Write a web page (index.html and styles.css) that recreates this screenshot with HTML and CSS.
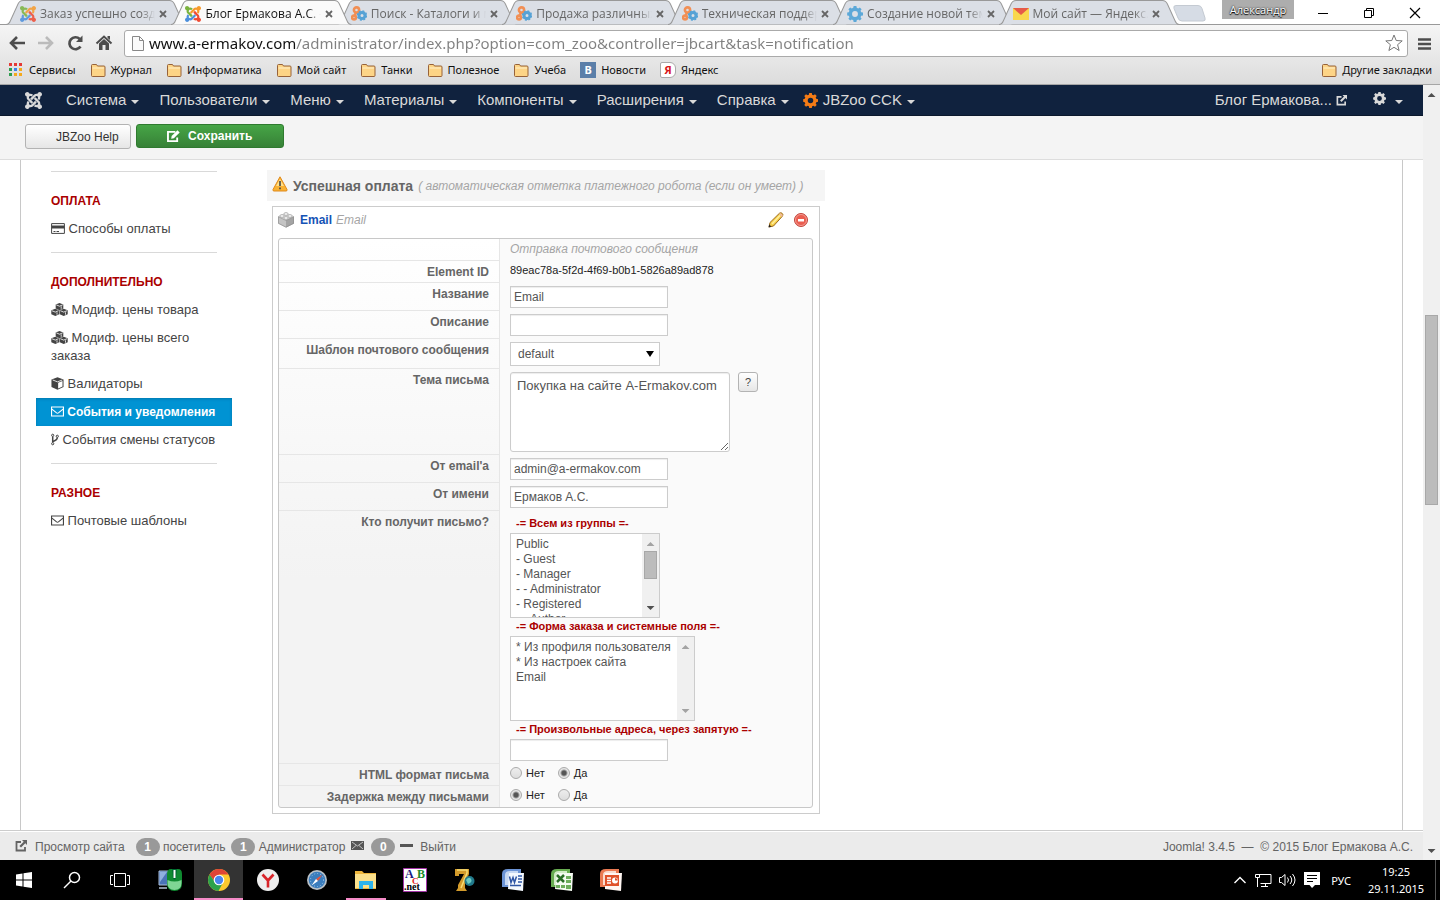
FILE: index.html
```html
<!DOCTYPE html>
<html lang="ru">
<head>
  <meta charset="UTF-8">
  <meta name="viewport" content="width=device-width, initial-scale=1.0">
  <title>Блог Ермакова А.С.</title>
  <link rel="stylesheet" href="styles.css">
</head>
<body>
  <!-- shared icons -->
  <svg class="defs" width="0" height="0">
    <defs>
      <path id="arm" d="M16.7 14.8L14.2 17.3l-2.4 2.3-.4.5c-1.4 1.4-3.3 1.8-5.1 1.4-.3 1.4-1.6 2.5-3.1 2.5C1.4 24 0 22.500 0 20.800c0-1.500 1.100-2.800 2.500-3.100-.4-1.800 0-3.700 1.400-5.100l.1-.2 2.400 2.400-.2.2c-.8.8-.8 2 0 2.800.8.800 2 .8 2.800 0l.5-.5 2.300-2.400 2.500-2.500z"/>
      <path id="gearShape" d="M7 0h3l.4 2 1.600.700L13.700 1.500l2 2-1.200 1.800.7 1.500 2 .4v3l-2 .4-.7 1.600 1.200 1.700-2 2-1.700-1.200-1.600.7L10 17.400H7l-.4-2-1.600-.7-1.700 1.200-2-2 1.200-1.700-.7-1.600L0 10.200v-3l1.800-.4.7-1.500L1.300 3.500l2-2L5 2.700 6.600 2zM8.500 5.500a3.200 3.200 0 1 0 0 6.400 3.200 3.200 0 0 0 0-6.400z" fill-rule="evenodd"/>
    </defs>
    <symbol id="joomla" viewBox="0 0 24 24">
      <use href="#arm" fill="#4b8fdc"/>
      <use href="#arm" fill="#7ab33e" transform="rotate(90 12 12)"/>
      <use href="#arm" fill="#f79a2b" transform="rotate(180 12 12)"/>
      <use href="#arm" fill="#ef4b33" transform="rotate(270 12 12)"/>
    </symbol>
    <symbol id="joomla-mono" viewBox="0 0 24 24">
      <use href="#arm"/>
      <use href="#arm" transform="rotate(90 12 12)"/>
      <use href="#arm" transform="rotate(180 12 12)"/>
      <use href="#arm" transform="rotate(270 12 12)"/>
    </symbol>
    <symbol id="gear" viewBox="0 0 17 17.400"><use href="#gearShape"/></symbol>
    <symbol id="gears" viewBox="0 0 16 16">
      <g fill="none" stroke="#f5823c" stroke-width="2.600"><circle cx="5.500" cy="4" r="2.600"/><circle cx="3" cy="11.500" r="1.900"/><path d="M5 6.500L3.500 10"/></g>
      <circle cx="11" cy="9.500" r="3" fill="none" stroke="#3f98d3" stroke-width="3"/>
      <circle cx="11" cy="9.500" r="4.600" fill="none" stroke="#3f98d3" stroke-width="1.200" stroke-dasharray="2 1.600"/>
    </symbol>
    <symbol id="folder" viewBox="0 0 16 14">
      <path d="M1.500 12.500V2.500q0-1 1-1h4l1 1.500h6.500q1 0 1 1v8.500q0 1-1 1h-11.500q-1 0-1-1z" fill="#fdd486" stroke="#976239"/>
      <path d="M2.500 5h11.500" stroke="#fff0c8"/>
    </symbol>
    <symbol id="close" viewBox="0 0 8 8"><path d="M1 1l6 6M7 1L1 7" stroke="currentColor" stroke-width="1.800"/></symbol>
    <symbol id="external" viewBox="0 0 12 12">
      <path d="M6 2H1.500v8.500H10V7" fill="none" stroke="currentColor" stroke-width="1.800"/>
      <path d="M7 0h5v5l-1.700-1.700L6 7.600 4.400 6l4.300-4.300z" fill="currentColor"/>
    </symbol>
    <symbol id="mail" viewBox="0 0 14 12">
      <path d="M.6 1.100h12.800v9.800H.6zM1 3.500l5 4q1 .7 2 0l5-4" fill="none" stroke="currentColor" stroke-width="1.200"/>
    </symbol>
    <symbol id="cube" viewBox="0 0 14 14">
      <path d="M7 .3l6.500 2.500v8L7 13.700.5 10.800v-8z" fill="currentColor"/>
      <path d="M7.700 6.300l4.700-1.900v5.700l-4.700 2.200z" fill="#fff"/>
      <path d="M1.800 3.200L7 5.200l5.200-2" fill="none" stroke="#fff" stroke-width=".9"/>
    </symbol>
    <symbol id="cubes" viewBox="0 0 17 13">
      <g fill="currentColor"><path d="M8.500 0l3.800 1.500v4l-3.800 1.700-3.800-1.700v-4z"/><path d="M4.300 5.800l4 1.500v4L4.300 13 .3 11.300v-4z"/><path d="M12.700 5.800l4 1.500v4l-4 1.700-4-1.700v-4z"/></g>
      <g fill="none" stroke="#fff" stroke-width=".8"><path d="M5.300 1.900l3.200 1.300 3.200-1.300M10.200 3.300v2.500M.8 7.700l3.500 1.400 3.200-1.400M6 9.300v2.400M9.300 7.700l3.400 1.400 3.400-1.400M14.500 9.300v2.400"/></g>
    </symbol>
  </svg>

  <header class="browser">
    <div class="tab-strip">
      <div class="tabs">
        <div class="tab">
          <svg class="tab-shape" viewBox="0 0 180 25" preserveAspectRatio="none"><path d="M0 24.500q3 0 4.500-4L12 4q1.500-3.500 5-3.500h146q3.500 0 5 3.500l7.500 16.500q1.500 4 4.500 4"/></svg>
          <svg class="fav"><use href="#joomla"/></svg><span class="tab-title">Заказ успешно созд</span>
          <button class="tab-close" aria-label="Закрыть"><svg><use href="#close"/></svg></button>
        </div>
        <div class="tab active">
          <svg class="tab-shape" viewBox="0 0 180 25" preserveAspectRatio="none"><path d="M0 24.500q3 0 4.500-4L12 4q1.500-3.500 5-3.500h146q3.500 0 5 3.500l7.500 16.500q1.500 4 4.500 4"/></svg>
          <svg class="fav"><use href="#joomla"/></svg><span class="tab-title">Блог Ермакова А.С. -</span>
          <button class="tab-close" aria-label="Закрыть"><svg><use href="#close"/></svg></button>
        </div>
        <div class="tab">
          <svg class="tab-shape" viewBox="0 0 180 25" preserveAspectRatio="none"><path d="M0 24.500q3 0 4.500-4L12 4q1.500-3.500 5-3.500h146q3.500 0 5 3.500l7.500 16.500q1.500 4 4.500 4"/></svg>
          <svg class="fav"><use href="#gears"/></svg><span class="tab-title">Поиск - Каталоги и м</span>
          <button class="tab-close" aria-label="Закрыть"><svg><use href="#close"/></svg></button>
        </div>
        <div class="tab">
          <svg class="tab-shape" viewBox="0 0 180 25" preserveAspectRatio="none"><path d="M0 24.500q3 0 4.500-4L12 4q1.500-3.500 5-3.500h146q3.500 0 5 3.500l7.500 16.500q1.500 4 4.500 4"/></svg>
          <svg class="fav"><use href="#gears"/></svg><span class="tab-title">Продажа различных</span>
          <button class="tab-close" aria-label="Закрыть"><svg><use href="#close"/></svg></button>
        </div>
        <div class="tab">
          <svg class="tab-shape" viewBox="0 0 180 25" preserveAspectRatio="none"><path d="M0 24.500q3 0 4.500-4L12 4q1.500-3.500 5-3.500h146q3.500 0 5 3.500l7.500 16.500q1.500 4 4.500 4"/></svg>
          <svg class="fav"><use href="#gears"/></svg><span class="tab-title">Техническая поддер</span>
          <button class="tab-close" aria-label="Закрыть"><svg><use href="#close"/></svg></button>
        </div>
        <div class="tab">
          <svg class="tab-shape" viewBox="0 0 180 25" preserveAspectRatio="none"><path d="M0 24.500q3 0 4.500-4L12 4q1.500-3.500 5-3.500h146q3.500 0 5 3.500l7.500 16.500q1.500 4 4.500 4"/></svg>
          <svg class="fav blue"><use href="#gear"/></svg><span class="tab-title">Создание новой тем</span>
          <button class="tab-close" aria-label="Закрыть"><svg><use href="#close"/></svg></button>
        </div>
        <div class="tab">
          <svg class="tab-shape" viewBox="0 0 180 25" preserveAspectRatio="none"><path d="M0 24.500q3 0 4.500-4L12 4q1.500-3.500 5-3.500h146q3.500 0 5 3.500l7.500 16.500q1.500 4 4.500 4"/></svg>
          <svg class="fav" viewBox="0 0 16 16"><path d="M0 2h16v12H0z" fill="#ffd633"/><path d="M0 2h16L8 9z" fill="#e8432e"/></svg><span class="tab-title">Мой сайт — Яндекс.</span>
          <button class="tab-close" aria-label="Закрыть"><svg><use href="#close"/></svg></button>
        </div>
      </div>
      <button class="new-tab" aria-label="Новая вкладка"><svg viewBox="0 0 33 17"><path d="M3 .5h22q3 0 4 3l3 9.500q1 3-2 3H9q-3 0-4-3L1 3.500Q0 .5 3 .5z" fill="#d6dce5" stroke="#c4cad2"/></svg></button>
      <div class="window-buttons">
        <button class="profile">Александр</button>
        <button aria-label="Свернуть"><svg viewBox="0 0 12 12"><path d="M1 6.500h10" stroke="#000"/></svg></button>
        <button aria-label="Развернуть"><svg viewBox="0 0 12 12"><path d="M1.500 3.500h7v7h-7zM3.500 3V1.500h7v7H9" fill="none" stroke="#000"/></svg></button>
        <button aria-label="Закрыть окно"><svg viewBox="0 0 12 12"><path d="M1 1l10 10M11 1L1 11" stroke="#000" stroke-width="1.200"/></svg></button>
      </div>
    </div>

    <div class="toolbar">
      <button aria-label="Назад"><svg viewBox="0 0 18 18"><path d="M9 3L3 9l6 6M3 9h14" fill="none" stroke="#4d4d4d" stroke-width="2.600"/></svg></button>
      <button aria-label="Вперёд"><svg viewBox="0 0 18 18"><path d="M9 3l6 6-6 6M15 9H1" fill="none" stroke="#bbb" stroke-width="2.600"/></svg></button>
      <button aria-label="Обновить"><svg viewBox="0 0 18 18"><path d="M14.500 12.500a6 6 0 1 1-.8-7.500" fill="none" stroke="#4d4d4d" stroke-width="2.700"/><path d="M16.500 1.500v6.500H10z" fill="#4d4d4d"/></svg></button>
      <button aria-label="Домой"><svg viewBox="0 0 18 18"><path d="M1.500 9.500L9 2.500l7.500 7" fill="none" stroke="#4d4d4d" stroke-width="2"/><path d="M4 9.500l5-4.500 5 4.500V16h-3.500v-5h-3v5H4zM12.500 2H15v4l-2.500-2z" fill="#4d4d4d"/></svg></button>
      <div class="omnibox">
        <svg class="doc" viewBox="0 0 12 15"><path d="M.5.5h7l4 4v10H.5zM7.500.5v4h4" fill="#fafafa" stroke="#888"/></svg>
        <input class="url" aria-label="Адрес" value="www.a-ermakov.com/administrator/index.php?option=com_zoo&amp;controller=jbcart&amp;task=notification">
        <svg class="star" viewBox="0 0 18 18"><path d="M9 1l2.200 5.500 6 .4-4.600 3.800 1.500 5.800L9 13.300l-5.100 3.200 1.500-5.800L.8 6.900l6-.4z" fill="#fff" stroke="#777"/></svg>
      </div>
      <button class="menu" aria-label="Меню"><svg viewBox="0 0 14 14"><path d="M0 2.500h13M0 7h13M0 11.500h13" stroke="#4d4d4d" stroke-width="2.600"/></svg></button>
    </div>

    <nav class="bookmarks">
      <a href="#"><svg viewBox="0 0 14 14"><path d="M0 0h3v3H0zM5 0h3v3H5zM10 0h3v3h-3z" fill="#e53935"/><path d="M0 5h3v3H0z" fill="#2e9e4f"/><path d="M5 5h3v3H5z" fill="#3b82e8"/><path d="M10 5h3v3h-3zM5 10h3v3H5zM10 10h3v3h-3z" fill="#f4a91c"/><path d="M0 10h3v3H0z" fill="#2e9e4f"/></svg>Сервисы</a>
      <a href="#"><svg><use href="#folder"/></svg>Журнал</a>
      <a href="#"><svg><use href="#folder"/></svg>Информатика</a>
      <a href="#"><svg><use href="#folder"/></svg>Мой сайт</a>
      <a href="#"><svg><use href="#folder"/></svg>Танки</a>
      <a href="#"><svg><use href="#folder"/></svg>Полезное</a>
      <a href="#"><svg><use href="#folder"/></svg>Учеба</a>
      <a href="#"><span class="vk">B</span>Новости</a>
      <a href="#"><span class="ya">Я</span>Яндекс</a>
      <a class="other" href="#"><svg><use href="#folder"/></svg>Другие закладки</a>
    </nav>
  </header>

  <div class="viewport">
    <div class="page">
      <nav class="navbar">
        <a class="brand" href="#" aria-label="Joomla"><svg><use href="#joomla-mono"/></svg></a>
        <a class="caret" href="#">Система</a>
        <a class="caret" href="#">Пользователи</a>
        <a class="caret" href="#">Меню</a>
        <a class="caret" href="#">Материалы</a>
        <a class="caret" href="#">Компоненты</a>
        <a class="caret" href="#">Расширения</a>
        <a class="caret" href="#">Справка</a>
        <a class="caret jbzoo" href="#"><svg><use href="#gear"/></svg>JBZoo CCK</a>
        <a class="site" href="#">Блог Ермакова... <svg><use href="#external"/></svg></a>
        <a class="caret settings" href="#" aria-label="Настройки"><svg><use href="#gear"/></svg></a>
      </nav>

      <div class="subhead">
        <button class="btn help-btn">JBZoo Help</button>
        <button class="btn save-btn"><svg viewBox="0 0 14 13"><path d="M9 2H1v10h10V8" fill="none" stroke="#fff" stroke-width="2"/><path d="M4.500 9.500l.5-3L11.300.3l2.400 2.400-6.300 6.300z" fill="#fff"/></svg>Сохранить</button>
      </div>

      <div class="content">
        <aside class="sidebar">
          <hr>
          <h3>ОПЛАТА</h3>
          <a href="#"><svg class="w14" viewBox="0 0 14 12"><path d="M.6 1.100h12.800v9.800H.6zM2.500 9h2M5.500 9h2.500" fill="none" stroke="currentColor"/><path d="M.6 3h12.800v3H.6z" fill="currentColor"/></svg> Способы оплаты</a>
          <hr>
          <h3>ДОПОЛНИТЕЛЬНО</h3>
          <a href="#"><svg class="w17"><use href="#cubes"/></svg> Модиф. цены товара</a>
          <a href="#"><svg class="w17"><use href="#cubes"/></svg> Модиф. цены всего заказа</a>
          <a href="#"><svg class="w13"><use href="#cube"/></svg> Валидаторы</a>
          <a class="active" href="#"><svg class="w13"><use href="#mail"/></svg> События и уведомления</a>
          <a href="#"><svg class="w8" viewBox="0 0 8 12"><g fill="none" stroke="currentColor"><circle cx="1.700" cy="1.800" r="1.100"/><circle cx="6.300" cy="2.800" r="1.100"/><circle cx="1.700" cy="10.200" r="1.100"/><path d="M1.700 3v6M6.300 4q0 2.500-4.300 4" stroke-width="1.500"/></g></svg> События смены статусов</a>
          <hr>
          <h3>РАЗНОЕ</h3>
          <a href="#"><svg class="w13"><use href="#mail"/></svg> Почтовые шаблоны</a>
        </aside>

        <main class="main">
          <h2 class="event">
            <svg viewBox="0 0 16 16"><path d="M8 .8L15 13.500q.5 1.500-1 1.500H2q-1.500 0-1-1.500z" fill="#f9b233" stroke="#e08a1c"/><path d="M8 3L4 10h8z" fill="#ffe08a"/><path d="M8 5v5M8 11.500v1.800" stroke="#444" stroke-width="1.600"/></svg>
            Успешная оплата <em>( автоматическая отметка платежного робота (если он умеет) )</em>
          </h2>

          <section class="element">
            <header class="element-head">
              <svg class="brick" viewBox="0 0 16 16"><path d="M0 4.500L8 1l8 3.500v7L8 15.500l-8-4z" fill="#c4c4c4"/><path d="M0 4.500L8 1l8 3.500L8 8.500z" fill="#e4e4e4"/><path d="M8 8.500v7l8-4v-7z" fill="#a4a4a4"/><path d="M.4 4.700L8 8.500l7.600-3.800v6.600L8 15.200.4 11.300z" fill="none" stroke="#8e8e8e" stroke-width=".7"/><g fill="#f6f6f6" stroke="#999" stroke-width=".7"><ellipse cx="8" cy="2" rx="2.200" ry="1.400"/><ellipse cx="4" cy="4" rx="2.200" ry="1.400"/><ellipse cx="12" cy="4" rx="2.200" ry="1.400"/><ellipse cx="8" cy="6" rx="2.200" ry="1.400"/></g></svg>
              <strong>Email</strong> <em>Email</em>
              <button class="edit" aria-label="Изменить"><svg viewBox="0 0 16 16"><path d="M1 15l1-4.500L11.500 1.200q1.500-1 2.700.2 1.300 1.300.3 2.700L5.500 14z" fill="#f7cf4a" stroke="#9c6a1c"/><path d="M4 12l8-8.500" stroke="#fff0a0" stroke-width="1.500"/><path d="M11 2l3 3 .8-1.500-2-2.300z" fill="#f0b9a0"/><path d="M.5 15.500l.8-3 2 2z" fill="#222"/></svg></button>
              <button aria-label="Удалить"><svg viewBox="0 0 16 16"><circle cx="8" cy="8" r="6.500" fill="#ea5d50" stroke="#c0473e"/><circle cx="8" cy="8" r="5.500" fill="none" stroke="#f49a90"/><path d="M5 7h6v2.500H5z" fill="#fff"/></svg></button>
            </header>

            <form class="params">
              <div class="row"><span class="label"></span><div class="field"><em>Отправка почтового сообщения</em></div></div>
              <div class="row"><span class="label">Element ID</span><div class="field small">89eac78a-5f2d-4f69-b0b1-5826a89ad878</div></div>
              <div class="row"><label class="label" for="name">Название</label><div class="field"><input class="text" id="name" value="Email"></div></div>
              <div class="row"><label class="label" for="desc">Описание</label><div class="field"><input class="text" id="desc"></div></div>
              <div class="row"><label class="label" for="layout">Шаблон почтового сообщения</label><div class="field"><span class="select-box"><select id="layout"><option>default</option></select></span></div></div>
              <div class="row"><label class="label" for="subject">Тема письма</label><div class="field subject"><textarea id="subject">Покупка на сайте A-Ermakov.com</textarea><button type="button" class="hint">?</button></div></div>
              <div class="row"><label class="label" for="from">От email'a</label><div class="field"><input class="text" id="from" value="admin@a-ermakov.com"></div></div>
              <div class="row"><label class="label" for="from-name">От имени</label><div class="field"><input class="text" id="from-name" value="Ермаков А.С."></div></div>
              <div class="row">
                <span class="label">Кто получит письмо?</span>
                <div class="field recipients">
                  <label for="groups">-= Всем из группы =-</label>
                  <div class="list-box groups">
                    <select id="groups" multiple>
                      <option>Public</option><option>- Guest</option><option>- Manager</option><option>- - Administrator</option><option>- Registered</option><option>- - Author</option>
                    </select>
                    <div class="scroll"><i class="up off"></i><i class="thumb"></i><i class="down"></i></div>
                  </div>
                  <label for="fields">-= Форма заказа и системные поля =-</label>
                  <div class="list-box fields">
                    <select id="fields" multiple>
                      <option>* Из профиля пользователя</option><option>* Из настроек сайта</option><option>Email</option>
                    </select>
                    <div class="scroll"><i class="up off"></i><i class="down off"></i></div>
                  </div>
                  <label for="custom">-= Произвольные адреса, через запятую =-</label>
                  <input class="text" id="custom">
                </div>
              </div>
              <div class="row"><span class="label">HTML формат письма</span><div class="field radios"><label><input type="radio" name="html">Нет</label><label><input type="radio" name="html" checked>Да</label></div></div>
              <div class="row"><span class="label">Задержка между письмами</span><div class="field radios"><label><input type="radio" name="delay" checked>Нет</label><label><input type="radio" name="delay">Да</label></div></div>
            </form>
          </section>
        </main>
      </div>

      <footer class="status">
        <a href="#"><svg class="ext"><use href="#external"/></svg>Просмотр сайта</a>
        <span class="visitors"><b>1</b> посетитель</span>
        <span><b>1</b> Администратор</span>
        <a class="inbox" href="#"><svg viewBox="0 0 13 9"><path d="M0 0h13v9H0z" fill="#555"/><path d="M1 1l5.500 4L12 1M1 8l4-3.500M12 8L8 4.500" fill="none" stroke="#ddd" stroke-width=".8"/></svg><b>0</b></a>
        <a class="logout" href="#"><svg viewBox="0 0 13 3"><path d="M0 0h13v3H0z" fill="#555"/></svg>Выйти</a>
        <span class="copyright">Joomla! 3.4.5 &nbsp;—&nbsp; © 2015 Блог Ермакова А.С.</span>
      </footer>
    </div>
    <div class="scroll page-scroll"><i class="up"></i><i class="thumb"></i><i class="down"></i></div>
  </div>

  <footer class="taskbar">
    <button class="system" aria-label="Пуск"><svg viewBox="0 0 24 24"><path d="M4 6.500l6.500-1v6H4zM11.500 5.300L20 4v7.500h-8.500zM4 12.500h6.500v6l-6.500-1zM11.500 12.500H20V20l-8.500-1.200z" fill="#fff"/></svg></button>
    <button class="system" aria-label="Поиск"><svg viewBox="0 0 24 24"><g fill="none" stroke="#fff" stroke-width="1.500"><circle cx="14.500" cy="9.500" r="5"/><path d="M11 13l-7 7"/></g></svg></button>
    <button class="system" aria-label="Представление задач"><svg viewBox="0 0 24 24"><path d="M6.500 5.500h11v13h-11zM5 7.500H2.500v9H5M19 7.500h2.500v9H19" fill="none" stroke="#fff"/></svg></button>
    <button aria-label="Мышь"><svg viewBox="0 0 24 24"><path d="M1 3h9v14H1z" fill="#4a74b8" stroke="#a8bcd8"/><path d="M2 4h7L2 14z" fill="#8fb0e0"/><path d="M1 19h8v2H1z" fill="#8892a0"/><path d="M9 6q0-5 4-5h7q4 0 4 5v9q0 8-7.500 8T9 15z" fill="#0f8a30"/><path d="M9.500 12q7 3 14 0v3q0 7-7 7t-7-7z" fill="#7fd694"/><path d="M14 1h5l-1 9q-1.500 3-3 0z" fill="#063"/><path d="M15.500 2h2v8h-2z" fill="#fff"/></svg></button>
    <button class="current" aria-label="Chrome"><svg viewBox="0 0 24 24"><circle cx="12" cy="12" r="11" fill="#fbc92e"/><path d="M2.500 6.500A11 11 0 0 1 21.500 6.500H12L8 14z" fill="#df4436"/><path d="M2.500 6.500A11 11 0 0 0 11.500 23l4.500-8.500-4-2.500-4 2z" fill="#2ba24c"/><circle cx="12" cy="12" r="5.300" fill="#fff"/><circle cx="12" cy="12" r="4.200" fill="#4a86ee"/></svg></button>
    <button aria-label="Яндекс"><svg viewBox="0 0 24 24"><circle cx="12" cy="12" r="11" fill="#eee"/><path d="M6.500 6.500L12 12.500l5.500-6M12 12v7.500" fill="none" stroke="#d8252a" stroke-width="2.600"/></svg></button>
    <button aria-label="Safari"><svg viewBox="0 0 24 24"><circle cx="12" cy="12" r="10" fill="#b9c0c6"/><circle cx="12" cy="12" r="8.300" fill="#3b7dbd"/><circle cx="12" cy="12" r="6.500" fill="none" stroke="#9cc9ea" stroke-dasharray="1 2"/><path d="M17.500 6.500L13 13l-2-2z" fill="#e5533d"/><path d="M6.500 17.500L13 13l-2-2z" fill="#fff"/></svg></button>
    <button class="running" aria-label="Проводник"><svg viewBox="0 0 24 24"><path d="M1 3h7l2 2h12v16H1z" fill="#eeb63c"/><path d="M1 6h21v14H1z" fill="#fbe08b"/><path d="M5 13h14v8h-4v-4H9v4H5z" fill="#2eb3ec"/></svg></button>
    <button aria-label="PascalABC.NET"><svg viewBox="0 0 24 24"><path d="M.5.5h23v23H.5z" fill="#fff" stroke="#a335a8"/><g class="abc"><text x="2" y="10" fill="#1a1a80">A</text><text x="14" y="10" fill="#1b8a2c">B</text><text x="9" y="16" fill="#e0201b" class="c">C</text><text x="1" y="22" fill="#000" class="net">.net</text></g></svg></button>
    <button aria-label="7"><svg viewBox="0 0 24 24"><path d="M3 1h14v5l-4 10v4l2 3H4l2-3v-3l6-11H7v2H3z" fill="#d39b2b"/><path d="M5 2h10v3L9 20" fill="none" stroke="#f6dc74" stroke-width="1.500"/><circle cx="17.500" cy="13" r="5" fill="#217a8c"/><path d="M14 12q3-4 5-1t-3 5z" fill="#6cc9c0"/></svg></button>
    <button aria-label="Word"><svg viewBox="0 0 24 24"><path d="M1 6q0-5 6-5h13v18H1z" fill="#6c94d6"/><path d="M4 7q0-4 5-4h8v14H4z" fill="#c7d8f3"/><path d="M8 5h15l-1 18-15-2z" fill="#f4f8fe"/><path d="M8.500 8.500l1.500 6 2-5 1.500 5 2-6M17 8h4M17 11h4M17 14h4M9 17.500h11" fill="none" stroke="#2e55a5" stroke-width="1.500"/></svg></button>
    <button aria-label="Excel"><svg viewBox="0 0 24 24"><path d="M1 6q0-5 6-5h13v18H1z" fill="#68ad51"/><path d="M4 7q0-4 5-4h8v14H4z" fill="#d3ecc8"/><path d="M7 5h16l-1 18-17-2z" fill="#f5fbf2"/><path d="M7 7l7 7M14 7l-7 7" stroke="#2a6e26" stroke-width="2.500"/><path d="M16 8h5v3h-5zM16 12h5v3h-5zM6 17h4v3H6zM11 17h4v3h-4zM16 17h5v4h-5z" fill="#6fae5e"/></svg></button>
    <button aria-label="PowerPoint"><svg viewBox="0 0 24 24"><path d="M1 6q0-5 6-5h13v18H1z" fill="#ea7a52"/><path d="M4 7q0-4 5-4h8v14H4z" fill="#fadccf"/><path d="M6 5h17l-1 18-16-2z" fill="#fff6f2"/><path d="M6 7h14v11H6z" fill="#e0522a"/><path d="M8 10h4M8 12.500h4M8 15h4" stroke="#fff" stroke-width="1.300"/><circle cx="16" cy="12.500" r="3" fill="#fff"/><path d="M16 12.500V10a3 3 0 0 1 3 2.500z" fill="#e0522a"/></svg></button>
    <div class="tray">
      <svg class="chev" viewBox="0 0 12 8"><path d="M.5 7L6 1.500 11.500 7" fill="none" stroke="#fff" stroke-width="1.400"/></svg>
      <svg class="net-icon" viewBox="0 0 17 15"><path d="M4 1.500h12v9H5.500M10.500 11v3M6 13.500h7M.5 1.500h4v3h-4zM2.500 5v9" fill="none" stroke="#fff"/></svg>
      <svg class="sound" viewBox="0 0 17 14"><path d="M.5 4.500h2L6 1.500v11l-3.500-3h-2zM8.500 4.500q2 2.500 0 5M11 3q3.500 4 0 8M13.500 1q5 6 0 12" fill="none" stroke="#fff"/></svg>
      <svg class="note" viewBox="0 0 16 16"><path d="M0 0h16v13h-5l-3 3-2.500-3H0z" fill="#fff"/><path d="M3 3.500h10M3 6.500h10M3 9.500h6" stroke="#000"/></svg>
      <span class="lang">РУС</span>
      <time class="clock">19:25<br>29.11.2015</time>
    </div>
  </footer>
</body>
</html>
```
FILE: styles.css
```css
* {
  box-sizing: border-box;
}

body {
  margin: 0;
  height: 100vh;
  display: flex;
  flex-direction: column;
  overflow: hidden;
  font: 13px/18px "Liberation Sans", Arial, sans-serif;
  color: #444;
}

a {
  color: inherit;
  text-decoration: none;
}

button {
  border: 0;
  padding: 0;
  background: none;
  font: inherit;
  color: inherit;
}

.defs {
  position: absolute;
}

/* browser */
.browser {
  flex: none;
  font: 12px/16px "Open Sans", "Noto Sans", sans-serif;
  color: #111;
  background: linear-gradient(#f5f5f5 25px, #dcdcdc);
  border-bottom: 1px solid #a6a6a6;
}

.tab-strip {
  display: flex;
  align-items: flex-start;
  height: 25px;
  padding-left: 6px;
  background: #fff;
  box-shadow: inset 0 -1px #999;
}

.tabs {
  display: flex;
  flex: 0 1 1173px;
  min-width: 0;
}

.tab {
  position: relative;
  flex: 1 1 0;
  min-width: 0;
  display: flex;
  align-items: center;
  height: 25px;
  padding: 2px 19px 0 14px;
  color: #666;
}

.tab + .tab {
  margin-left: -15px;
}

.tab.active {
  z-index: 1;
  color: #111;
}

.tab-shape {
  position: absolute;
  left: 0;
  top: 0;
  width: 100%;
  height: 25px;
  fill: #dbdfe6;
  stroke: #999;
}

.active .tab-shape {
  fill: #fafafa;
}

.tab .fav {
  position: relative;
  flex: none;
  width: 16px;
  height: 16px;
  margin-right: 4px;
}

.blue {
  fill: #469fd6;
}

.tab:not(.active) .fav {
  opacity: .85;
}

.tab-title {
  position: relative;
  flex: 1;
  overflow: hidden;
  white-space: nowrap;
  -webkit-mask: linear-gradient(to right, #000 88%, transparent);
  mask: linear-gradient(to right, #000 88%, transparent);
}

.tab-close {
  position: relative;
  display: flex;
  margin: 0 0 0 4px;
  color: #666;
}

.tab-close svg {
  width: 8px;
  height: 8px;
}

.new-tab {
  flex: none;
  margin: 5px 0 0 -6px;
}

.new-tab svg {
  display: block;
  width: 33px;
  height: 17px;
}

.window-buttons {
  margin-left: auto;
  display: flex;
  align-items: flex-start;
  padding-right: 2px;
}

.window-buttons button {
  width: 46px;
  height: 25px;
}

.window-buttons svg {
  display: block;
  width: 12px;
  height: 12px;
  margin: 1px auto 0;
}

.window-buttons .profile {
  width: 72px;
  height: 19px;
  margin-right: 6px;
  background: #adadad;
  color: #fff;
  font-size: 11px;
  text-shadow: 0 0 2px #000, 0 1px 1px #000;
}

.toolbar {
  display: flex;
  align-items: center;
  height: 33px;
  padding: 3px 8px 0;
  gap: 11px;
}

.toolbar button,
.toolbar svg {
  display: block;
  width: 18px;
  height: 18px;
}

.toolbar .menu {
  width: 14px;
}

.toolbar .menu svg {
  width: 14px;
  height: 14px;
  margin-top: 2px;
}

.omnibox {
  flex: 1;
  display: flex;
  align-items: center;
  height: 27px;
  margin-right: -1px;
  padding: 0 4px 0 7px;
  background: #fff;
  border: 1px solid #aaa;
  border-radius: 3px;
}

.omnibox .doc {
  width: 12px;
  height: 15px;
}

/* host part is black, the rest of the address grey */
.url {
  flex: 1;
  min-width: 0;
  border: 0;
  padding: 0;
  margin-left: 5px;
  font: 15px/22px "Noto Sans", "Open Sans", sans-serif;
  color: transparent;
  background: linear-gradient(to right, #111 147px, #808080 147px);
  -webkit-background-clip: text;
  background-clip: text;
}

.bookmarks {
  display: flex;
  align-items: center;
  height: 26px;
  padding: 0 8px 2px;
  gap: 14px;
  font-family: "Noto Sans", "Open Sans", sans-serif;
  font-size: 11px;
}

.bookmarks a {
  display: flex;
  align-items: center;
  gap: 5px;
  white-space: nowrap;
}

.bookmarks svg {
  width: 16px;
  height: 14px;
}

.vk,
.ya {
  width: 16px;
  height: 16px;
  font-size: 11px;
  font-weight: bold;
  text-align: center;
}

.vk {
  background: #5b7fa9;
  color: #fff;
}

.ya {
  background: #fff;
  border: 1px solid #aaa;
  border-radius: 2px 6px 6px 2px;
  line-height: 14px;
  color: #d8141b;
}

.bookmarks .other {
  margin-left: auto;
}

/* scrollbars */
.scroll {
  flex: none;
  display: flex;
  flex-direction: column;
  width: 17px;
  background: #f0f0f0;
}

.scroll .up,
.scroll .down {
  flex: none;
  width: 8px;
  height: 4px;
  margin: 8px auto 5px;
  background: #505050;
  clip-path: polygon(50% 0, 100% 100%, 0 100%);
}

.scroll .down {
  margin: auto auto 7px;
  clip-path: polygon(0 0, 100% 0, 50% 100%);
}

.scroll .off {
  background: #a3a3a3;
}

.scroll .thumb {
  width: 13px;
  height: 28px;
  margin: 0 2px;
  background: #bcbcbc;
  border: 1px solid #a8a8a8;
}

.page-scroll .thumb {
  height: 190px;
  margin-top: 213px;
}

/* admin page */
.viewport {
  flex: 1;
  display: flex;
  min-height: 0;
}

.page {
  flex: 1;
  min-width: 0;
  display: flex;
  flex-direction: column;
  background: #fff;
}

.navbar {
  flex: none;
  display: flex;
  align-items: center;
  height: 31px;
  padding: 0 20px 0 15px;
  background: #10223e;
  border-bottom: 1px solid #0b182c;
  font-size: 15px;
  color: #d9d9d9;
}

.navbar a {
  display: flex;
  align-items: center;
  padding: 0 10px;
  white-space: nowrap;
}

.navbar svg {
  fill: currentColor;
}

.caret::after {
  content: "";
  margin: 3px 0 0 5px;
  border: 4px solid transparent;
  border-top-color: currentColor;
  border-bottom: 0;
}

.navbar .brand {
  margin-right: 4px;
}

.brand svg {
  width: 17px;
  height: 17px;
}

.navbar .jbzoo {
  padding-left: 4px;
}

.jbzoo svg {
  width: 15px;
  height: 15px;
  margin-right: 5px;
  color: #f47b16;
}

.navbar .site {
  margin-left: auto;
}

.site svg {
  width: 11px;
  height: 11px;
  margin-left: 4px;
}

.navbar .settings {
  padding: 0 0 0 16px;
}

.settings svg {
  width: 13px;
  height: 13px;
  margin: 0 4px 3px 0;
}

.subhead {
  flex: none;
  display: flex;
  align-items: flex-start;
  gap: 5px;
  height: 44px;
  padding: 8px 25px;
  background: #f4f4f4;
  border-bottom: 1px solid #ddd;
}

.btn {
  border: 1px solid #b3b3b3;
  border-radius: 3px;
  background: linear-gradient(#fff, #e6e6e6);
  font-size: 12px;
  color: #333;
}

.help-btn {
  height: 25px;
  padding: 0 11px 0 30px;
}

.save-btn {
  display: flex;
  align-items: center;
  justify-content: center;
  gap: 8px;
  width: 148px;
  height: 24px;
  border-color: #2f7a2f;
  background: linear-gradient(#46a546, #378137);
  font-weight: bold;
  color: #fff;
}

.save-btn svg {
  width: 13px;
  height: 12px;
}

.content {
  flex: 1;
  min-height: 0;
  display: flex;
  align-items: flex-start;
  gap: 35px;
  margin: 0 20px;
  padding: 10px 15px 0;
  border: solid #c8c8c8;
  border-width: 0 1px;
}

.sidebar {
  flex: none;
  width: 196px;
  padding-top: 1px;
}

.sidebar hr {
  margin: 9px 15px 20px;
  border: 0;
  height: 1px;
  background: #d9d9d9;
}

.sidebar hr:first-child {
  margin-top: 0;
}

.sidebar h3 {
  margin: 0 15px 5px;
  font-size: 12px;
  line-height: 18px;
  color: #a00;
}

.sidebar a {
  display: block;
  padding: 5px 15px;
}

.sidebar a.active {
  background: #0093d3;
  box-shadow: inset 0 1px 3px #0078ad;
  color: #fff;
  font-size: 12px;
  font-weight: bold;
  white-space: nowrap;
}

.sidebar svg {
  height: 13px;
  vertical-align: -2px;
}

.w8 {
  width: 8px;
}

.w13 {
  width: 13px;
}

.w14 {
  width: 14px;
}

.w17 {
  width: 17px;
}

.main {
  width: 558px;
}

em {
  font-weight: normal;
  color: #a5a5a5;
}

.event {
  display: flex;
  align-items: center;
  gap: 5px;
  height: 31px;
  margin: 0 0 5px;
  padding: 0 5px;
  background: #f5f5f5;
  font-size: 14px;
  color: #666;
  white-space: nowrap;
}

.event svg {
  flex: none;
  width: 16px;
  height: 16px;
  margin-bottom: 4px;
}

.event em {
  font-size: 12px;
}

.element {
  margin: 0 5px;
  padding: 0 6px 5px 5px;
  border: 1px solid #ccc;
}

.element-head {
  display: flex;
  align-items: center;
  height: 31px;
  padding: 0 4px 5px 0;
  gap: 4px;
  font-size: 12px;
}

.element-head svg {
  display: block;
  width: 16px;
  height: 16px;
}

.element-head .brick {
  margin-right: 2px;
}

.element-head strong {
  color: #1553b5;
}

.element-head .edit {
  margin: 0 5px 0 auto;
}

.params {
  border: 1px solid #c8c8c8;
  border-radius: 3px;
  overflow: hidden;
  background: linear-gradient(to right, transparent 221px, #fafafa 221px), linear-gradient(#fff, #f3f3f3 60%);
  font-size: 12px;
}

.row {
  display: flex;
}

.label {
  flex: none;
  width: 221px;
  min-height: 22px;
  padding: 2px 10px 1px;
  border: solid #e6e6e6;
  border-width: 0 1px 1px 0;
  text-align: right;
  font-weight: bold;
  color: #666;
}

.row:last-child .label {
  min-height: 21px;
  border-bottom: 0;
}

.field {
  padding: 3px 10px;
  line-height: 14px;
}

.small,
.radios {
  padding-top: 2px;
  font-size: 11px;
  color: #222;
}

.text,
textarea,
.select-box,
.list-box {
  border: 1px solid #ccc;
  background: #fff;
  font: 12px/16px "Liberation Sans", Arial, sans-serif;
  color: #555;
}

.text,
textarea {
  box-shadow: inset 0 1px 1px rgba(0, 0, 0, .075);
}

.text {
  display: block;
  width: 158px;
  height: 22px;
  padding: 0 3px;
}

.select-box {
  position: relative;
  display: block;
  width: 150px;
  height: 24px;
}

.select-box select {
  appearance: none;
  width: 100%;
  height: 22px;
  padding: 0 7px;
  border: 0;
  background: none;
  font: inherit;
  color: inherit;
}

.select-box::after {
  content: "";
  position: absolute;
  right: 5px;
  top: 8px;
  border: 4px solid transparent;
  border-top: 6px solid #000;
  border-bottom: 0;
}

.subject {
  display: flex;
  align-items: flex-start;
  gap: 8px;
}

textarea {
  display: block;
  width: 220px;
  height: 80px;
  padding: 4px 6px;
  border-radius: 3px;
  font-size: 13px;
  line-height: 18px;
}

.hint {
  width: 20px;
  height: 20px;
  border: 1px solid #b3b3b3;
  border-radius: 3px;
  background: linear-gradient(#fff, #e6e6e6);
  font-size: 11px;
}

.recipients {
  padding-top: 4px;
}

.recipients label {
  display: block;
  padding: 0 6px 2px;
  font-size: 11px;
  font-weight: bold;
  line-height: 16px;
  color: #a00;
}

.list-box {
  display: flex;
  height: 85px;
}

.groups {
  width: 150px;
}

.fields {
  width: 185px;
}

.list-box select {
  flex: 1;
  min-width: 0;
  height: 83px;
  padding: 3px 0 0 3px;
  border: 0;
  background: none;
  font: inherit;
  color: inherit;
  overflow: hidden;
}

.radios {
  display: flex;
  gap: 13px;
}

.radios label {
  display: flex;
  align-items: center;
  gap: 4px;
  height: 14px;
}

.radios input {
  appearance: none;
  width: 12px;
  height: 12px;
  margin: 0;
  border: 1px solid #aaa;
  border-radius: 50%;
  background: linear-gradient(#eee, #ddd);
}

.radios input:checked {
  background: radial-gradient(#555 2px, #e6e6e6 4px);
}

.status {
  flex: none;
  display: flex;
  align-items: center;
  height: 30px;
  padding: 3px 10px 0 15px;
  background: #ebebeb;
  border-top: 1px solid #ccc;
  box-shadow: inset 0 1px #fff;
  font-size: 12px;
  color: #646464;
  white-space: nowrap;
}

.status b {
  display: inline-block;
  min-width: 24px;
  border-radius: 9px;
  background: #999;
  color: #fff;
  text-align: center;
}

.status .ext {
  width: 12px;
  height: 12px;
  margin-right: 8px;
  vertical-align: -1px;
}

.visitors {
  margin: 0 6px 0 11px;
}

.inbox svg {
  width: 13px;
  height: 9px;
  margin: 0 7px 1px 6px;
}

.logout svg {
  width: 13px;
  height: 3px;
  margin: 0 7px 4px 5px;
}

.copyright {
  margin-left: auto;
}

/* windows taskbar */
.taskbar {
  flex: none;
  display: flex;
  height: 40px;
  background: #000;
  color: #fff;
  font: 11px/17px "Noto Sans", "Open Sans", sans-serif;
}

.taskbar button {
  width: 49px;
  height: 40px;
}

.taskbar .system {
  width: 48px;
}

.taskbar .system + button:not(.system) {
  margin-left: 1px;
}

.taskbar button svg {
  display: block;
  width: 24px;
  height: 24px;
  margin: 0 auto;
}

.taskbar .current {
  background: #333;
  box-shadow: inset 0 -2px #f58bc8;
}

.taskbar .running {
  background: linear-gradient(#f58bc8, #f58bc8) center bottom / 40px 2px no-repeat;
}

.abc {
  font: bold 12px "Liberation Serif", serif;
}

.abc .c {
  font-size: 9px;
}

.abc .net {
  font-size: 10px;
}

.tray {
  margin: 0 4px 0 auto;
  display: flex;
  align-items: center;
  padding-right: 4px;
  border-right: 1px solid #555;
}

.chev {
  width: 12px;
  height: 8px;
}

.net-icon {
  width: 17px;
  height: 15px;
  margin-left: 9px;
}

.sound {
  width: 17px;
  height: 14px;
  margin-left: 7px;
}

.note {
  width: 16px;
  height: 16px;
  margin-left: 8px;
}

.lang {
  margin-left: 11px;
}

.clock {
  width: 60px;
  margin-left: 15px;
  margin-right: 5px;
  text-align: center;
}
```
